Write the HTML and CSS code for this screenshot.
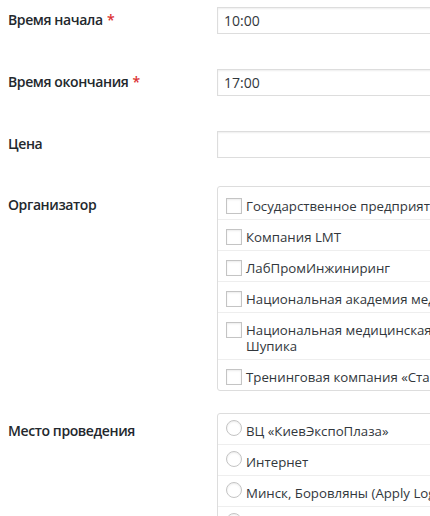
FILE: index.html
```html
<!DOCTYPE html>
<html lang="ru">
<head>
<meta charset="utf-8">
<title>Событие</title>
<link rel="stylesheet" href="styles.css">
</head>
<body>
<div class="form">
  <div class="row row-input">
    <div class="label">Время начала <span class="req">*</span></div>
    <div class="field"><div class="input">10:00</div></div>
  </div>
  <div class="row row-input">
    <div class="label">Время окончания <span class="req">*</span></div>
    <div class="field"><div class="input">17:00</div></div>
  </div>
  <div class="row row-input">
    <div class="label">Цена</div>
    <div class="field"><div class="input"></div></div>
  </div>
  <div class="row row-checks">
    <div class="label label-checks">Организатор</div>
    <div class="field">
      <ul class="list list-checks">
        <li class="item"><span class="check"></span><span class="text">Государственное предприятие «Укрмедпроектбуд»</span></li>
        <li class="item"><span class="check"></span><span class="text">Компания LMT</span></li>
        <li class="item"><span class="check"></span><span class="text">ЛабПромИнжиниринг</span></li>
        <li class="item"><span class="check"></span><span class="text">Национальная академия медицинских наук Украины</span></li>
        <li class="item"><span class="check"></span><span class="text">Национальная медицинская академия последипломного образования имени П. Л.<br>Шупика</span></li>
        <li class="item"><span class="check"></span><span class="text">Тренинговая компания «Стандарт»</span></li>
      </ul>
    </div>
  </div>
  <div class="row row-radios">
    <div class="label label-radios">Место проведения</div>
    <div class="field">
      <ul class="list list-radios">
        <li class="item"><span class="radio"></span><span class="text">ВЦ «КиевЭкспоПлаза»</span></li>
        <li class="item"><span class="radio"></span><span class="text">Интернет</span></li>
        <li class="item"><span class="radio"></span><span class="text">Минск, Боровляны (Apply Logic)</span></li>
        <li class="item"><span class="radio"></span><span class="text">Одесса</span></li>
      </ul>
    </div>
  </div>
</div>
</body>
</html>
```

FILE: styles.css
```css
html, body {
  margin: 0;
  background: #ffffff;
}
body {
  padding: 7px 0 0 8px;
  height: 516px;
  box-sizing: border-box;
  overflow: hidden;
  font-family: "Open Sans", "Noto Sans", "Liberation Sans", sans-serif;
  color: #23282d;
}
.form {
  display: flex;
  flex-direction: column;
  width: 620px;
}
.row {
  display: grid;
  grid-template-columns: 209px 1fr;
}
.row-input + .row-input {
  margin-top: 35px;
}
.row-checks {
  margin-top: 28px;
}
.row-radios {
  margin-top: 22px;
}
.label {
  font-size: 14px;
  font-weight: 600;
  line-height: 18px;
  padding-top: 4px;
  color: #23282d;
  letter-spacing: -0.4px;
}
.label-checks {
  padding-top: 10px;
}
.label-radios {
  padding-top: 9px;
}
.req {
  color: #dc3232;
  margin-left: 1px;
}
.input {
  box-sizing: border-box;
  height: 27px;
  border: 1px solid #dddddd;
  box-shadow: inset 0 1px 2px rgba(0, 0, 0, 0.07);
  background: #fff;
  padding: 0 6px;
  font-size: 14px;
  line-height: 25px;
  color: #32373c;
}
.list {
  list-style: none;
  margin: 0;
  padding: 0;
  border: 1px solid #dddddd;
  border-radius: 3px;
  background: #fff;
}
.list-checks {
  padding: 2px 0 0;
}
.item {
  display: flex;
  align-items: flex-start;
  gap: 4px;
  padding: 9px 8px 5px 8px;
  font-size: 13.25px;
  line-height: 16px;
  color: #32373c;
  white-space: nowrap;
}
.item + .item {
  border-top: 1px solid #eeeeee;
}
.check {
  flex: none;
  width: 16px;
  height: 16px;
  box-sizing: border-box;
  border: 1px solid #c4c4c4;
  background: #fff;
  box-shadow: inset 0 1px 2px rgba(0, 0, 0, 0.08);
}
.radio {
  flex: none;
  width: 16px;
  height: 16px;
  box-sizing: border-box;
  border: 1px solid #c4c4c4;
  border-radius: 50%;
  background: #fff;
  box-shadow: inset 0 1px 2px rgba(0, 0, 0, 0.08);
  margin-top: -3px;
  margin-bottom: 3px;
}
```
